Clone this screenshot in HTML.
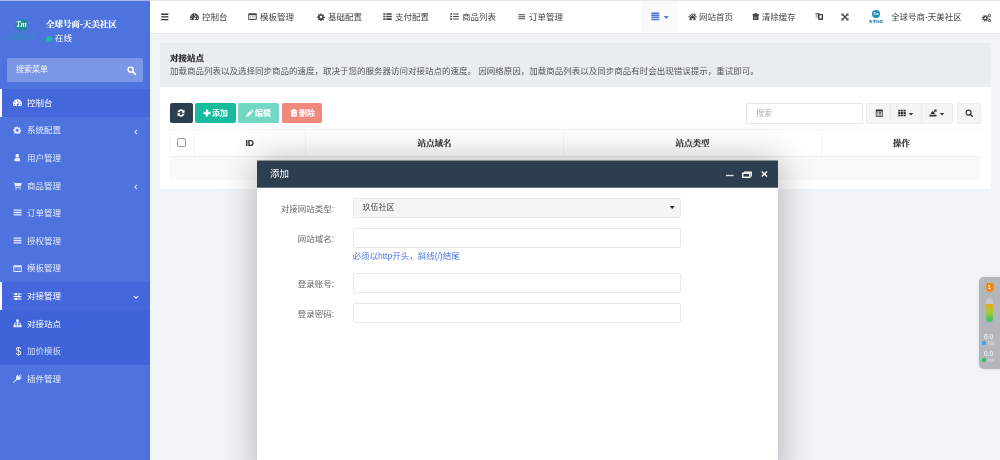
<!DOCTYPE html>
<html lang="zh-CN">
<head>
<meta charset="utf-8">
<title>全球号商-天美社区</title>
<style>
*{box-sizing:border-box;margin:0;padding:0}
html,body{width:1000px;height:460px;overflow:hidden}
#all{position:absolute;left:0;top:0;width:1000px;height:460px;opacity:.999;will-change:transform}
body{font-family:"Liberation Sans","Noto Sans CJK SC",sans-serif;font-size:8.5px;color:#444;background:#f1f4f6;position:relative}
.abs{position:absolute}
svg{display:block}
#side{position:absolute;left:0;top:0;width:150px;height:460px;background:#4e73df;color:#fff}
#topstrip{position:absolute;left:0;top:0;width:1000px;height:1px;background:linear-gradient(90deg,#a9b9ea 0,#a9b9ea 150px,#e6e7e9 150px);z-index:50}
.logo{position:absolute;left:15px;top:19px;width:12.5px;height:12px;border-radius:50%;background:#1f8a9a;color:#fff;font:italic bold 8px "Liberation Serif",serif;text-align:center;line-height:11.500px;letter-spacing:-.3px}
.logot{position:absolute;left:7px;top:32px;width:29px;text-align:center;font-size:6.8px;line-height:9px;color:#2c93b8;white-space:nowrap;font-weight:bold;opacity:.75}
.uname{-webkit-text-stroke:.2px #fff;position:absolute;left:46px;top:16.5px;font:bold 8.5px "Liberation Serif","Noto Serif CJK SC",serif;white-space:nowrap;color:#fff;line-height:14px}
.ustat{position:absolute;left:46px;top:32px;font-size:8.5px;line-height:12px;white-space:nowrap;color:#fff}
.ustat i{display:inline-block;width:6px;height:6px;border-radius:50%;background:#18bc9c;margin-right:3px;vertical-align:-0.5px}
.sbox{position:absolute;left:7px;top:58px;width:136px;height:24px;border-radius:2px;background:rgba(255,255,255,.25)}
.sbox span{position:absolute;left:9px;top:0;line-height:24.5px;font-size:8px;color:#fff;opacity:.95}
.sbox svg{position:absolute;left:120px;top:8px;color:#fff}
.mi{position:absolute;left:0;width:150px;height:27.6px;line-height:27.6px;color:rgba(255,255,255,.85);font-size:8.5px;white-space:nowrap}
.mi .ic{position:absolute;left:13px;top:9px;width:9px;height:9px}
.mi .tx{position:absolute;left:27px;top:.8px}
.mi .ar{position:absolute;left:132.5px;top:12px}
.mi.act{background:#4468db;color:#fff;border-left:2px solid #fff}
.mi.act .ic{left:11px}.mi.act .tx{left:25px}.mi.act .ar{left:130.5px}
.sub{position:absolute;left:0;top:309.8px;width:150px;height:55.2px;background:#3f64da}
#head{position:absolute;left:150px;top:1px;width:850px;height:33px;background:#fff;border-bottom:1px solid #e9ecef}
.hn{position:absolute;top:0;height:31px;line-height:32px;font-size:8.5px;color:#444;white-space:nowrap;display:flex;align-items:center}
.hn .hi{display:inline-block;color:inherit}
#panel{position:absolute;left:160px;top:43px;width:831px;height:146px;background:#fff}
#phead{position:absolute;left:0;top:0;width:831px;height:44px;background:#e8edf0}
#phead b{position:absolute;left:10px;top:8.3px;font:bold 8.5px "Liberation Serif","Noto Serif CJK SC",serif;color:#222;line-height:14px;-webkit-text-stroke:.25px #222}
#phead p{position:absolute;left:10px;top:22px;font-size:8.5px;line-height:13px;color:#555;white-space:nowrap}
.btn{position:absolute;top:60px;height:20px;border-radius:2px;color:#fff;font-size:8px;font-weight:bold;line-height:21.400px;white-space:nowrap}
.btn svg{position:absolute;top:6px}
.tb{position:absolute;top:60px;height:20.5px;background:#f5f5f5;border:1px solid #ececec;color:#333}
.tb svg{position:absolute;top:4.6px}
.th{position:absolute;top:86px;height:27.7px;line-height:27px;text-align:center;font:bold 8.5px/27px "Liberation Sans","Noto Serif CJK SC",serif;-webkit-text-stroke:.2px #333;color:#333;border-top:1px solid #f5f5f5;border-bottom:1px solid #f2f2f2;border-left:1px solid #f6f6f6}
#modal{position:absolute;left:257px;top:160px;width:521px;height:320px;background:#fff;box-shadow:.7px .7px 34px rgba(0,0,0,.3);z-index:20}
#mhead{position:absolute;left:0;top:0;width:521px;height:28px;background:#2c3e50;color:#fff;border-top:1px solid #8d959d;border-bottom:1px solid #6b7885}
#mhead span{position:absolute;left:13px;top:-1px;line-height:27.800px;font-size:9.5px}
.lab{position:absolute;left:0;width:77px;text-align:right;font-size:8.5px;color:#666;line-height:22.600px;white-space:nowrap}
.inp{position:absolute;left:96px;width:328px;height:20px;border:1px solid #e5e8ee;background:#fff;border-radius:2px}
#wid{position:absolute;left:979px;top:277px;width:26px;height:92px;border-radius:5px;background:#b3b6bb;z-index:30;box-shadow:0 0 3px rgba(0,0,0,.15)}
</style>
</head>
<body>
<div id="all">
<div id="topstrip"></div>
<div id="side">
  <div class="logo">Tm</div>
  <div class="logot">天美社区</div>
  <div class="uname">全球号商-天美社区</div>
  <div class="ustat"><i></i>在线</div>
  <div class="sbox"><span>搜索菜单</span><svg width="9" height="9" viewBox="0 0 16 16" fill="currentColor"><circle cx="6.500" cy="6.500" r="4.500" fill="none" stroke="currentColor" stroke-width="2.600"/><path d="M10 10l4.600 4.600" stroke="currentColor" stroke-width="3" stroke-linecap="round"/></svg></div>
  <div class="sub"></div>
  <div class="mi act" style="top:89.0px"><span class="ic"><svg width="9" height="9" viewBox="0 0 16 16" fill="currentColor"><path d="M8 2.2a7.8 7.8 0 0 0-6.6 12h13.2A7.8 7.8 0 0 0 8 2.2zM8 4a1 1 0 1 1 0 2 1 1 0 0 1 0-2zM3.6 6a1 1 0 1 1 0 2 1 1 0 0 1 0-2zm8.8 0a1 1 0 1 1 0 2 1 1 0 0 1 0-2zM2.6 10a1 1 0 1 1 0 2 1 1 0 0 1 0-2zm10.8 0a1 1 0 1 1 0 2 1 1 0 0 1 0-2zM9.6 6.4l.9.3-1.2 3.7a1.8 1.8 0 1 1-1-.3z" fill-rule="evenodd"/></svg></span><span class="tx">控制台</span></div>
  <div class="mi" style="top:116.6px"><span class="ic"><svg width="8.5" height="8.5" viewBox="0 0 16 16" fill="currentColor"><path fill-rule="evenodd" d="M6.8 1h2.4l.4 2 1.2.5 1.7-1.1 1.7 1.7-1.1 1.7.5 1.2 2 .4v2.4l-2 .4-.5 1.2 1.1 1.7-1.7 1.7-1.7-1.1-1.2.5-.4 2H6.800l-.4-2-1.2-.5-1.700 1.100-1.700-1.700 1.100-1.700-.5-1.200-2-.4V6.800l2-.4.5-1.200-1.100-1.700 1.700-1.700 1.700 1.100 1.200-.5zM8 5.400a2.600 2.600 0 1 0 0 5.200 2.600 2.600 0 0 0 0-5.200z"/></svg></span><span class="tx">系统配置</span><span class="ar"><svg width="6" height="6" viewBox="0 0 16 16" fill="currentColor"><path d="M10.500 2.500L5 8l5.500 5.500" fill="none" stroke="currentColor" stroke-width="2.8"/></svg></span></div>
  <div class="mi" style="top:144.2px"><span class="ic"><svg width="8.5" height="8.5" viewBox="0 0 16 16" fill="currentColor"><path d="M8 1.500a3.500 3.500 0 1 1 0 7 3.500 3.500 0 0 1 0-7zM2.500 14.500c0-3.500 1.500-5.500 3.300-5.700.6.500 1.400.800 2.200.800s1.600-.3 2.200-.8c1.800.2 3.300 2.200 3.300 5.700 0 .6-.5 1-1.200 1H3.700c-.7 0-1.200-.4-1.200-1z"/></svg></span><span class="tx">用户管理</span></div>
  <div class="mi" style="top:171.8px"><span class="ic"><svg width="9" height="9" viewBox="0 0 16 16" fill="currentColor"><path d="M.5 2h2.300l.5 1.500h12.200l-1.300 6H5l.3 1.200h8.500v1.300H4.200L2.100 3.300H.5zM5.500 13a1.300 1.300 0 1 1 0 2.600 1.300 1.300 0 0 1 0-2.600zm7 0a1.300 1.300 0 1 1 0 2.600 1.300 1.300 0 0 1 0-2.600z"/></svg></span><span class="tx">商品管理</span><span class="ar"><svg width="6" height="6" viewBox="0 0 16 16" fill="currentColor"><path d="M10.500 2.500L5 8l5.500 5.500" fill="none" stroke="currentColor" stroke-width="2.8"/></svg></span></div>
  <div class="mi" style="top:199.4px"><span class="ic"><svg width="9" height="9" viewBox="0 0 16 16" fill="currentColor"><path d="M1 2.500h14v2.400H1zM1 6.800h14v2.400H1zM1 11.100h14v2.400H1z"/></svg></span><span class="tx">订单管理</span></div>
  <div class="mi" style="top:227.0px"><span class="ic"><svg width="9" height="9" viewBox="0 0 16 16" fill="currentColor"><path d="M1 2.500h14v2.400H1zM1 6.800h14v2.400H1zM1 11.100h14v2.400H1z"/></svg></span><span class="tx">授权管理</span></div>
  <div class="mi" style="top:254.6px"><span class="ic"><svg width="9" height="9" viewBox="0 0 16 16" fill="currentColor"><path fill-rule="evenodd" d="M1.500 2h13c.6 0 1 .4 1 1v10c0 .6-.4 1-1 1h-13c-.6 0-1-.4-1-1V3c0-.6.4-1 1-1zM2.200 5.800v6.500h11.600V5.800z"/><path d="M3.500 7.300h2v1.200h-2zm3.300 0h5.700v1.200H6.800zM3.500 9.800h2V11h-2zm3.300 0h5.700V11H6.800z" opacity=".45"/></svg></span><span class="tx">模板管理</span></div>
  <div class="mi act" style="top:282.2px"><span class="ic" style="margin-left:.3px;margin-top:1px"><svg width="9" height="9" viewBox="0 0 16 16" fill="currentColor"><path d="M1 2.800h3v-1h3v1h8v1.800H7v1H4v-1H1zM1 7.100h8v-1h3v1h3v1.800h-3v1H9v-1H1zM1 11.400h3v-1h3v1h8v1.800H7v1H4v-1H1z"/></svg></span><span class="tx">对接管理</span><span class="ar"><svg width="6" height="6" viewBox="0 0 16 16" fill="currentColor"><path d="M2.500 5.500L8 11l5.500-5.500" fill="none" stroke="currentColor" stroke-width="2.8"/></svg></span></div>
  <div class="mi" style="top:309.8px;color:#fff"><span class="ic"><svg width="9" height="9" viewBox="0 0 16 16" fill="currentColor"><path d="M5.800 1h4.400v4H8.700v1.800h4.800V10H15v4.500h-4V10h1.300V8H8.700v2H10v4.500H6V10h1.300V8H3.700v2H5v4.500H1V10h1.500V6.800h4.800V5H5.800z"/></svg></span><span class="tx">对接站点</span></div>
  <div class="mi" style="top:337.4px;color:rgba(255,255,255,.75)"><span class="ic" style="font-size:10px;line-height:10px;top:9.300px;left:14px;width:9px;text-align:center;color:rgba(255,255,255,.95)">$</span><span class="tx">加价模板</span></div>
  <div class="mi" style="top:365.0px"><span class="ic"><svg width="9" height="9" viewBox="0 0 16 16" fill="currentColor"><path d="M14.800 1.200l.9.900-3.200 3.200 1 1 .9-.9.900.9-1.800 1.800c-1.800 1.800-4.400 2.100-6.300.9L3 13.200c-.6.600-1.500 1.200-2.400 1.600l-.4-.4c.4-.9 1-1.800 1.600-2.400L6 7.800c-1.200-1.900-.9-4.500.9-6.300L8.700-.300l.9.900-.9.900 1 1 3.200-3.200.9.900L10.600 3.400l1 1z" transform="translate(0 1)"/></svg></span><span class="tx">插件管理</span></div>
</div>

<div id="head">
<div class="hn" style="left:10.8px"><span class="hi"><svg width="8" height="8" viewBox="0 0 8 8" fill="#333"><path d="M.2.600h7.200v1.300H.2zM.2 3.250h7.200v1.300H.2zM.2 5.900h7.200v1.300H.2z"/></svg></span></div>
<div class="hn" style="left:40px"><span class="hi" style="width:9px"><svg width="9" height="9" viewBox="0 0 16 16" fill="currentColor"><path d="M8 2.2a7.8 7.8 0 0 0-6.6 12h13.2A7.8 7.8 0 0 0 8 2.2zM8 4a1 1 0 1 1 0 2 1 1 0 0 1 0-2zM3.6 6a1 1 0 1 1 0 2 1 1 0 0 1 0-2zm8.8 0a1 1 0 1 1 0 2 1 1 0 0 1 0-2zM2.6 10a1 1 0 1 1 0 2 1 1 0 0 1 0-2zm10.8 0a1 1 0 1 1 0 2 1 1 0 0 1 0-2zM9.6 6.4l.9.3-1.2 3.7a1.8 1.8 0 1 1-1-.3z" fill-rule="evenodd"/></svg></span><span style="margin-left:3px">控制台</span></div>
<div class="hn" style="left:98px"><span class="hi" style="width:9px"><svg width="9" height="9" viewBox="0 0 16 16" fill="currentColor"><path fill-rule="evenodd" d="M1.500 2h13c.6 0 1 .4 1 1v10c0 .6-.4 1-1 1h-13c-.6 0-1-.4-1-1V3c0-.6.4-1 1-1zM2.200 5.800v6.500h11.600V5.800z"/><path d="M3.500 7.300h2v1.200h-2zm3.300 0h5.700v1.200H6.800zM3.500 9.800h2V11h-2zm3.300 0h5.700V11H6.800z" opacity=".45"/></svg></span><span style="margin-left:3px">模板管理</span></div>
<div class="hn" style="left:166.5px"><span class="hi" style="width:8px"><svg width="8" height="8" viewBox="0 0 16 16" fill="currentColor"><path fill-rule="evenodd" d="M6.8 1h2.4l.4 2 1.2.5 1.7-1.1 1.7 1.7-1.1 1.7.5 1.2 2 .4v2.4l-2 .4-.5 1.2 1.1 1.7-1.7 1.7-1.7-1.1-1.2.5-.4 2H6.800l-.4-2-1.2-.5-1.700 1.100-1.700-1.700 1.100-1.700-.5-1.200-2-.4V6.800l2-.4.5-1.200-1.100-1.700 1.700-1.700 1.700 1.100 1.200-.5zM8 5.400a2.600 2.600 0 1 0 0 5.200 2.600 2.600 0 0 0 0-5.200z"/></svg></span><span style="margin-left:3.5px">基础配置</span></div>
<div class="hn" style="left:233px"><span class="hi" style="width:9px"><svg width="9" height="9" viewBox="0 0 16 16" fill="currentColor"><path d="M.5 2h4v3h-4zM5.800 2h9.700v3H5.800zM.5 6.500h4v3h-4zM5.800 6.500h9.700v3H5.800zM.5 11h4v3h-4zM5.800 11h9.700v3H5.800z"/></svg></span><span style="margin-left:3px">支付配置</span></div>
<div class="hn" style="left:300px"><span class="hi" style="width:9px"><svg width="9" height="9" viewBox="0 0 16 16" fill="currentColor"><path d="M.5 2h3v3h-3zM5.500 2.500h10v2h-10zM.5 6.500h3v3h-3zM5.500 7h10v2h-10zM.5 11h3v3h-3zM5.500 11.500h10v2h-10z"/></svg></span><span style="margin-left:3px">商品列表</span></div>
<div class="hn" style="left:368px"><span class="hi" style="width:7.5px"><svg width="7.5" height="7.5" viewBox="0 0 16 16" fill="currentColor"><path d="M1 2.500h14v2.400H1zM1 6.800h14v2.400H1zM1 11.100h14v2.400H1z"/></svg></span><span style="margin-left:3.5px">订单管理</span></div>
<div class="hn" style="left:491px;width:37px;background:#fafafa;color:#4e73df"><span class="hi" style="margin-left:10px"><svg width="8.5" height="8.5" viewBox="0 0 16 16" fill="currentColor"><path d="M.5.800h15v2.900H.5zM.5 4.700h15v2.900H.5zM.5 8.600h15v2.900H.5zM.5 12.500h15v2.900H.5z"/></svg></span><span class="hi" style="margin-left:3.300px;margin-top:1.500px"><svg width="6.5" height="6.5" viewBox="0 0 16 16" fill="currentColor"><path d="M2 5h12L8 12z"/></svg></span></div>
<div class="hn" style="left:538px"><span class="hi" style="width:9px"><svg width="9" height="9" viewBox="0 0 16 16" fill="currentColor"><path d="M8 2.200L.4 8.500l.9 1.100L8 4.100l6.700 5.500.9-1.100-2.400-2V2.500h-1.900v2.400zM8 5.500l-5.200 4.300V14.500h3.700v-3.500h3v3.500h3.700V9.800z"/></svg></span><span style="margin-left:2px">网站首页</span></div>
<div class="hn" style="left:602.3px"><span class="hi" style="width:7.5px"><svg width="7.5" height="7.5" viewBox="0 0 16 16" fill="currentColor"><path fill-rule="evenodd" d="M5.200.5h5.600l.8 1.800H15V4.600H1V2.300h3.400zM2.200 4.900h11.600V14c0 .9-.7 1.600-1.500 1.600H3.700c-.8 0-1.500-.7-1.500-1.600zM5.400 7.800v5h.7v-5zm2.250 0v5h.7v-5zm2.250 0v5h.7v-5z"/></svg></span><span style="margin-left:2px">清除缓存</span></div>
<div class="hn" style="left:664.5px"><span class="hi" style="margin-top:-1.500px"><svg width="8.5" height="8.5" viewBox="0 0 16 16" fill="currentColor"><path d="M1 2h7v9H1z" fill="#bdbdbd"/><path d="M1 2h8v2H1z" fill="#666"/><path fill-rule="evenodd" d="M6 4h9v10.500H6zM8.200 6.200v6.100h4.600V6.200z" fill="#222"/></svg></span></div>
<div class="hn" style="left:691px"><span class="hi"><svg width="8" height="8" viewBox="0 0 16 16" fill="currentColor"><path d="M3.200 5L5 3.200 12.800 11 11 12.800zM11 3.200L12.800 5 5 12.800 3.200 11z"/><path d="M1 1h5L4.300 2.700l2.400 2.400-1.600 1.600-2.400-2.400L1 6zM15 1v5l-1.700-1.700-2.400 2.400-1.600-1.600 2.400-2.400L10 1zM1 15v-5l1.700 1.700 2.400-2.400 1.600 1.600-2.400 2.400L6 15zM15 15h-5l1.700-1.700-2.400-2.400 1.600-1.600 2.400 2.400L15 10z"/></svg></span></div>
<div class="hn" style="left:741px">全球号商-天美社区</div>
<div class="hn" style="left:831.5px"><span class="hi" style="margin-top:1.500px"><svg width="9.5" height="9.5" viewBox="0 0 16 16" fill="currentColor"><circle cx="5.500" cy="8.800" r="2.900" fill="none" stroke="currentColor" stroke-width="2.300"/><circle cx="5.500" cy="8.800" r="4.700" fill="none" stroke="currentColor" stroke-width="1.800" stroke-dasharray="1.850 1.840"/><circle cx="12.800" cy="4.300" r="1.700" fill="none" stroke="currentColor" stroke-width="1.500"/><circle cx="12.800" cy="4.300" r="2.700" fill="none" stroke="currentColor" stroke-width="1.100" stroke-dasharray="1.060 1.060"/><circle cx="12.800" cy="12.700" r="1.700" fill="none" stroke="currentColor" stroke-width="1.500"/><circle cx="12.800" cy="12.700" r="2.700" fill="none" stroke="currentColor" stroke-width="1.100" stroke-dasharray="1.060 1.060"/></svg></span></div>
<div class="abs" style="left:721.7px;top:9.300px;width:8.300px;height:7.600px;border-radius:50%;background:#1f8fb5;color:#fff;font:italic bold 4px/7.600px 'Liberation Serif',serif;text-align:center">Tm</div>
<div class="abs" style="left:716px;top:18.5px;width:20px;text-align:center;font-size:3.6px;line-height:4px;color:#1f7fa5;font-weight:bold;white-space:nowrap">天美社区</div>
</div>

<div id="panel">
  <div id="phead"><b>对接站点</b><p>加载商品列表以及选择同步商品的速度，取决于您的服务器访问对接站点的速度。 因网络原因，加载商品列表以及同步商品有时会出现错误提示，重试即可。</p></div>
  <div class="btn" style="left:10px;width:22.5px;background:#2c3e50"><svg width="8" height="8" viewBox="0 0 16 16" fill="currentColor" style="left:7px"><path d="M15 1v6.300H8.700l2.300-2.300a3.800 3.800 0 0 0-6.300 1.500H.8A7.400 7.400 0 0 1 13.200 2.800zM1 15V8.700h6.300L5 11a3.800 3.800 0 0 0 6.300-1.500h3.900A7.400 7.400 0 0 1 2.800 13.200z"/></svg></div>
  <div class="btn" style="left:35px;width:41px;background:#18bc9c"><svg width="8" height="8" viewBox="0 0 16 16" fill="currentColor" style="left:8px"><path d="M5.700 1h4.600v4.700H15v4.600h-4.700V15H5.700v-4.700H1V5.700h4.700z"/></svg><span style="position:absolute;left:17px">添加</span></div>
  <div class="btn" style="left:78px;width:41px;background:#74d7c4"><svg width="8" height="8" viewBox="0 0 16 16" fill="currentColor" style="left:8px"><path d="M11.700.5l3.800 3.800-2 2-3.800-3.800zM8.700 3.500l3.800 3.800-7.300 7.300L.5 15.500l.9-4.700z"/></svg><span style="position:absolute;left:17px">编辑</span></div>
  <div class="btn" style="left:122px;width:40px;background:#ef897e"><svg width="8" height="8" viewBox="0 0 16 16" fill="currentColor" style="left:8px"><path fill-rule="evenodd" d="M5.200.5h5.600l.8 1.800H15V4.600H1V2.300h3.400zM2.200 4.900h11.600V14c0 .9-.7 1.600-1.500 1.600H3.700c-.8 0-1.500-.7-1.500-1.600zM5.400 7.800v5h.7v-5zm2.250 0v5h.7v-5zm2.250 0v5h.7v-5z"/></svg><span style="position:absolute;left:17px">删除</span></div>

  <div class="abs" style="left:586px;top:60px;width:117px;height:20.5px;border:1px solid #e6e6e6;background:#fff;border-radius:1px"><span style="position:absolute;left:9px;line-height:19px;color:#b0b0b0;font-size:8px">搜索</span></div>
  <div class="tb" style="left:706px;width:25px;border-radius:2px 0 0 2px"><svg width="8.5" height="8.5" viewBox="0 0 16 16" fill="currentColor" style="left:7.5px;top:4.8px"><path fill-rule="evenodd" d="M1.500 1h13v14h-13zM3 4.500V13.500h10V4.500zM4.300 6h1.500v1.400H4.300zm2.700 0h4.700v1.400H7zM4.300 8.300h1.500v1.400H4.300zm2.700 0h4.700v1.400H7zM4.300 10.600h1.500V12H4.300zm2.700 0h4.700V12H7z"/></svg></div>
  <div class="tb" style="left:730px;width:32px"><svg width="8" height="8" viewBox="0 0 16 16" fill="currentColor" style="left:7px"><path d="M.5 1.500h4.300v3.600H.5zM5.850 1.500h4.300v3.600h-4.300zM11.200 1.500h4.300v3.600h-4.300zM.5 6.200h4.300v3.600H.5zM5.850 6.200h4.300v3.600h-4.300zM11.200 6.200h4.300v3.600h-4.300zM.5 10.900h4.300v3.600H.5zM5.850 10.900h4.300v3.600h-4.300zM11.200 10.900h4.300v3.600h-4.300z"/></svg><svg width="6" height="6" viewBox="0 0 16 16" fill="currentColor" style="left:17.2px;top:6.8px"><path d="M2 5h12L8 12z"/></svg></div>
  <div class="tb" style="left:761px;width:32px;border-radius:0 2px 2px 0"><svg width="8" height="8" viewBox="0 0 16 16" fill="currentColor" style="left:7px"><path d="M1 11.500h14V15H1zM9.500 1H15v5.500l-1.900-1.900L8.500 9.200 6.800 7.500l4.600-4.600zM3 10.200L6.500 4l2 2-1.700 1.500 1.700 1.700 1.500-1.700 3 2.700z"/></svg><svg width="6" height="6" viewBox="0 0 16 16" fill="currentColor" style="left:17.2px;top:6.8px"><path d="M2 5h12L8 12z"/></svg></div>
  <div class="tb" style="left:797px;width:24px;border-radius:2px"><svg width="8.5" height="8.5" viewBox="0 0 16 16" fill="currentColor" style="left:6.6px"><circle cx="6.800" cy="6.800" r="4.700" fill="none" stroke="currentColor" stroke-width="2.200"/><path d="M10.300 10.300l4.300 4.300" stroke="currentColor" stroke-width="2.600" stroke-linecap="round"/></svg></div>

  <div class="th" style="left:9.5px;width:24px"><i style="position:absolute;left:6.5px;top:8px;width:8.5px;height:8.5px;border:1px solid #9a9a9a;border-radius:2px;background:#fff"></i></div>
  <div class="th" style="left:33.5px;width:111.5px">ID</div>
  <div class="th" style="left:145px;width:258px">站点域名</div>
  <div class="th" style="left:403px;width:258px">站点类型</div>
  <div class="th" style="left:661px;width:160px">操作</div>
  <div class="abs" style="left:10px;top:114px;width:811px;height:23px;background:#f9f9f9"></div>
</div>

<div id="modal">
  <div id="mhead"><span>添加</span>
    <svg width="8" height="3" viewBox="0 0 8 3" style="position:absolute;left:469.300px;top:13.400px"><path d="M0 1.500h7.600" stroke="#fff" stroke-width="1.400" opacity=".85"/></svg>
    <svg width="10" height="7" viewBox="0 0 10 7" style="position:absolute;left:485.200px;top:10px" fill="none" stroke="#fff"><path d="M2 1.100h7.300v4.400" stroke-width="1.100"/><rect x=".7" y="2.200" width="7.200" height="4.100" stroke-width="1.400"/></svg>
    <svg width="7" height="6" viewBox="0 0 7 6" style="position:absolute;left:503.800px;top:10px"><path d="M.7.500l5.300 5M6 .5l-5.300 5" stroke="#fff" stroke-width="1.300"/></svg>
  </div>
  <div class="lab" style="top:38px">对接网站类型:</div>
  <div class="inp" style="top:38px;background:#f5f5f5;border-color:#e8e8e8"><span style="position:absolute;left:8.5px;line-height:18px;color:#444;font-size:8px">玖伍社区</span><svg width="6.5" height="6.5" viewBox="0 0 16 16" fill="currentColor" style="position:absolute;left:314.500px;top:4.700px;color:#222"><path d="M2 5h12L8 12z"/></svg></div>
  <div class="lab" style="top:68px">网站域名:</div>
  <div class="inp" style="top:68px"></div>
  <div class="abs" style="left:95.500px;top:90.300px;color:#4e73df;font-size:8.5px;line-height:12px;white-space:nowrap">必须以http开头，斜线(/)结尾</div>
  <div class="lab" style="top:113px">登录账号:</div>
  <div class="inp" style="top:113px"></div>
  <div class="lab" style="top:143px">登录密码:</div>
  <div class="inp" style="top:143px"></div>
</div>

<div id="wid">
  <div class="abs" style="left:6.500px;top:5.500px;width:8px;height:9px;background:#f08a1c;border-radius:2px 2px 4px 4px;color:#fff;font-size:6px;line-height:9px;text-align:center;font-weight:bold">1</div>
  <div class="abs" style="left:6.500px;top:20.500px;width:7px;height:9px;background:#c6c8cc;border-radius:3.500px 3.500px 0 0"></div>
  <div class="abs" style="left:6.500px;top:27px;width:7px;height:17.500px;background:linear-gradient(#f2a41e,#a4cc3a 45%,#2cc36b);border-radius:1px 1px 3.500px 3.500px"></div>
  <div class="abs" style="left:5px;top:55.500px;font-size:6.500px;line-height:7px;color:#fff">0.0</div>
  <div class="abs" style="left:9px;top:63.500px;font-size:4.500px;line-height:5px;color:#e4e6ea">K/s</div>
  <div class="abs" style="left:3px;top:64.300px;width:3.500px;height:3.500px;background:#2aa6f0;border-radius:50%"></div>
  <div class="abs" style="left:5px;top:72.500px;font-size:6.500px;line-height:7px;color:#fff">0.0</div>
  <div class="abs" style="left:9px;top:80.500px;font-size:4.500px;line-height:5px;color:#e4e6ea">K/s</div>
  <div class="abs" style="left:3px;top:81.300px;width:3.500px;height:3.500px;background:#22c06a;border-radius:50%"></div>
</div>
</div>
</body>
</html>
